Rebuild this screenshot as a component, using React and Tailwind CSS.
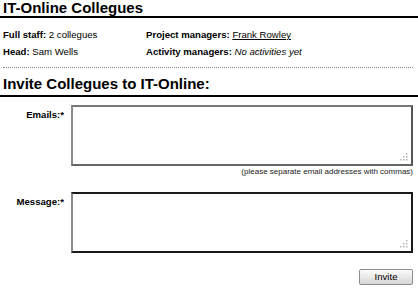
function Grip() {
  const dots = [
    [6, 0],
    [3, 3], [6, 3],
    [0, 6], [3, 6], [6, 6],
  ];
  return (
    <svg className="absolute right-[5px] bottom-[5px]" width="8" height="8" viewBox="0 0 8 8">
      {dots.map(([x, y], i) => (
        <rect key={i} x={x} y={y} width="1.5" height="1.5" fill="#b5b5b5" />
      ))}
    </svg>
  );
}

export default function App() {
  return (
    <div className="w-[418px] h-[293px] bg-white text-black font-['Liberation_Sans',Arial,sans-serif] overflow-hidden">
      <h1 className="h-[18px] border-b-2 border-black pl-[3px] text-[15px] font-bold leading-[15px]">
        IT-Online Collegues
      </h1>
      <div className="pt-[8px] pl-[3px] grid grid-cols-[143px_1fr] text-[9.6px] leading-[17px]">
        <div><b>Full staff:</b> 2 collegues</div>
        <div><b>Project managers:</b> <span className="underline">Frank Rowley</span></div>
        <div><b>Head:</b> Sam Wells</div>
        <div><b>Activity managers:</b> <i>No activities yet</i></div>
      </div>
      <div className="mt-[7px] ml-[3px] w-[410px] border-t border-dotted border-[#888]" />
      <h2 className="mt-[7px] h-[22px] border-b-2 border-black pl-[3px] text-[15px] font-bold leading-[18px]">
        Invite Collegues to IT-Online:
      </h2>
      <div className="mt-[8px] flex gap-[7px]">
        <label className="w-[64px] pt-[4px] text-right text-[9.6px] font-bold leading-[12px]">Emails:*</label>
        <div className="relative">
          <textarea className="block resize-none w-[342px] h-[61px] border-2 border-t-[#777] border-r-[#555] border-b-[#666] border-l-[#8a8a8a] bg-white" />
          <Grip />
        </div>
      </div>
      <div className="mt-[1px] w-[413px] text-right text-[8px] leading-[10px] text-[#222]">
        (please separate email addresses with commas)
      </div>
      <div className="mt-[15px] flex gap-[7px]">
        <label className="w-[64px] pt-[4px] text-right text-[9.6px] font-bold leading-[12px]">Message:*</label>
        <div className="relative">
          <textarea className="block resize-none w-[342px] h-[61px] border-2 border-t-[#1a1a1a] border-r-[#1a1a1a] border-b-[#1a1a1a] border-l-[#8a8a8a] bg-white" />
          <Grip />
        </div>
      </div>
      <div className="mt-[16px] flex w-[413px] justify-end">
        <button className="w-[54px] h-[16px] border border-[#8c8c8c] rounded-[2px] bg-gradient-to-b from-[#fcfcfc] to-[#d6d6d6] text-[9.6px] leading-[14px] text-black">
          Invite
        </button>
      </div>
    </div>
  );
}
